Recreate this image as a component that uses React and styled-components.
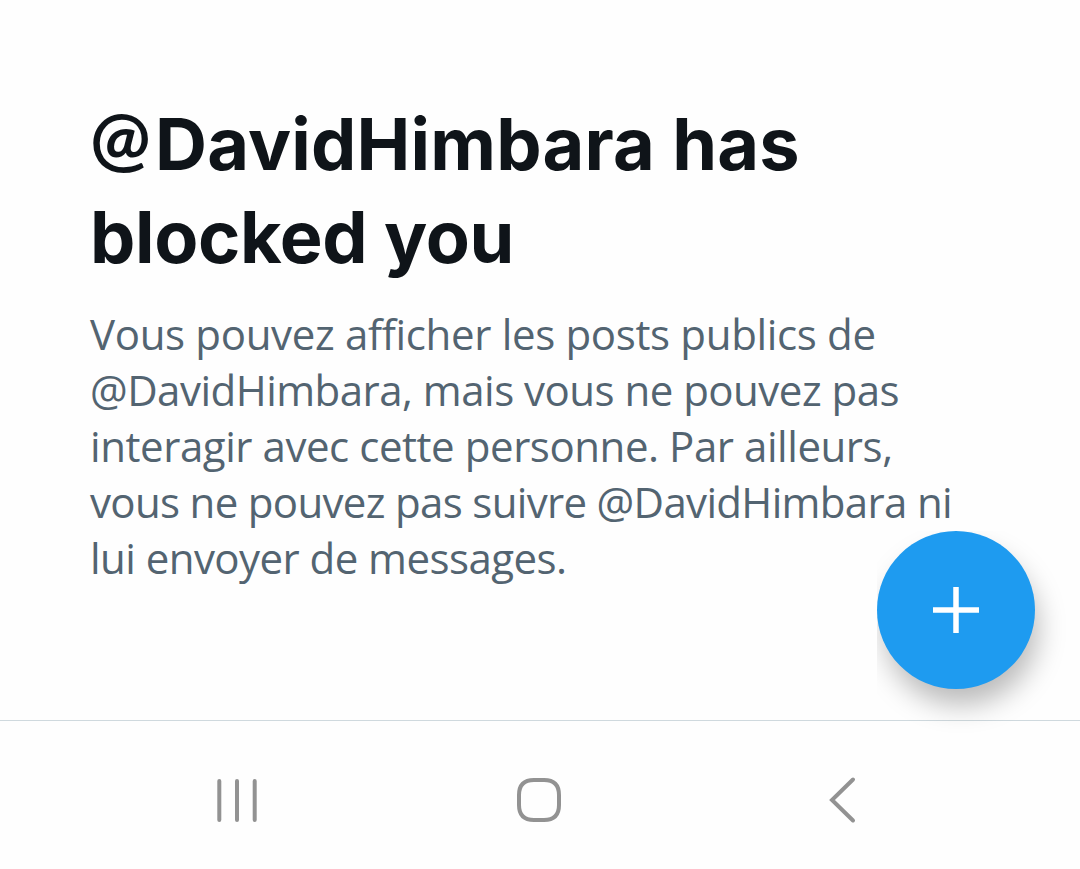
import React from 'react'
import styled, { createGlobalStyle } from 'styled-components'

const GlobalStyle = createGlobalStyle`
  * { box-sizing: border-box; }
  body { margin: 0; background: #fefefe; }
`
const Screen = styled.div`
  position: relative;
  display: flex;
  flex-direction: column;
  width: 1080px;
  height: 869px;
  overflow: hidden;
  background: #fefefe;
  font-family: 'Open Sans', 'Noto Sans', sans-serif;
`
const Notice = styled.main`
  height: 720px;
  padding: 97px 90px 0;
`
const Title = styled.h1`
  margin: 0;
  color: #0f1419;
  font-family: Inter, sans-serif;
  font-size: 72px;
  font-weight: 700;
  line-height: 93px;
`
const At = styled.span`
  margin-right: 4px;
  font-family: Lato, sans-serif;
  font-size: 72px;
  line-height: 0;
  vertical-align: 6px;
`
const Body = styled.p`
  margin: 23px 0 0;
  color: #536471;
  font-size: 42px;
  line-height: 56px;
`
const Line = styled.span`
  display: block;
  width: max-content;
  white-space: nowrap;
  letter-spacing: ${({ $spacing }) => $spacing || 0}px;
`
const ComposeArea = styled.div`
  position: absolute;
  top: 531px;
  left: 877px;
  clip-path: inset(0 -45px -60px 0);
`
const ComposeButton = styled.button`
  display: flex;
  align-items: center;
  justify-content: center;
  width: 158px;
  height: 158px;
  padding: 0;
  border: 0;
  border-radius: 50%;
  background: #1e9bf0;
  box-shadow: 5px 18px 28px -2px rgba(0, 0, 0, 0.27);
`
const NavBar = styled.nav`
  display: flex;
  height: 149px;
  border-top: 1px solid #cfd9de;
`
const NavButton = styled.button`
  display: flex;
  padding: 0;
  border: 0;
  background: none;
`

const bodyLines = [
  { text: 'Vous pouvez afficher les posts publics de', spacing: -0.33 },
  { text: '@DavidHimbara, mais vous ne pouvez pas', spacing: -0.51 },
  { text: 'interagir avec cette personne. Par ailleurs,', spacing: -0.44 },
  { text: 'vous ne pouvez pas suivre @DavidHimbara ni', spacing: -0.67 },
  { text: 'lui envoyer de messages.', spacing: -0.55 },
]

const App = () => (
  <>
    <GlobalStyle />
    <Screen>
      <Notice>
        <Title>
          <Line $spacing={0.2}><At>@</At>DavidHimbara has</Line>
          <Line $spacing={-0.35}>blocked you</Line>
        </Title>
        <Body>{bodyLines.map(l => <Line key={l.text} $spacing={l.spacing}>{l.text}</Line>)}</Body>
      </Notice>
      <NavBar>
        <NavButton aria-label="Recents">
          <svg width="360" height="148" fill="none" stroke="#929292" strokeWidth="4" strokeLinecap="round">
            <path d="M219.3 60v39M237 60v39M254.7 60v39" />
          </svg>
        </NavButton>
        <NavButton aria-label="Home">
          <svg width="360" height="148" fill="none" stroke="#929292" strokeWidth="4">
            <path d="M174 59H184C194 59 199 64 199 74V84C199 94 194 99 184 99H174C164 99 159 94 159 84V74C159 64 164 59 174 59Z" />
          </svg>
        </NavButton>
        <NavButton aria-label="Back">
          <svg width="360" height="148" fill="none" stroke="#929292" strokeWidth="4" strokeLinecap="round" strokeLinejoin="miter">
            <path d="M133 58.5L112 79l21 20.5" />
          </svg>
        </NavButton>
      </NavBar>
      <ComposeArea>
        <ComposeButton aria-label="Compose">
          <svg width="48" height="48" viewBox="0 0 48 48" stroke="#fff" strokeWidth="5.5">
            <path d="M1 24h46M24 1v46" />
          </svg>
        </ComposeButton>
      </ComposeArea>
    </Screen>
  </>
)

export default App
